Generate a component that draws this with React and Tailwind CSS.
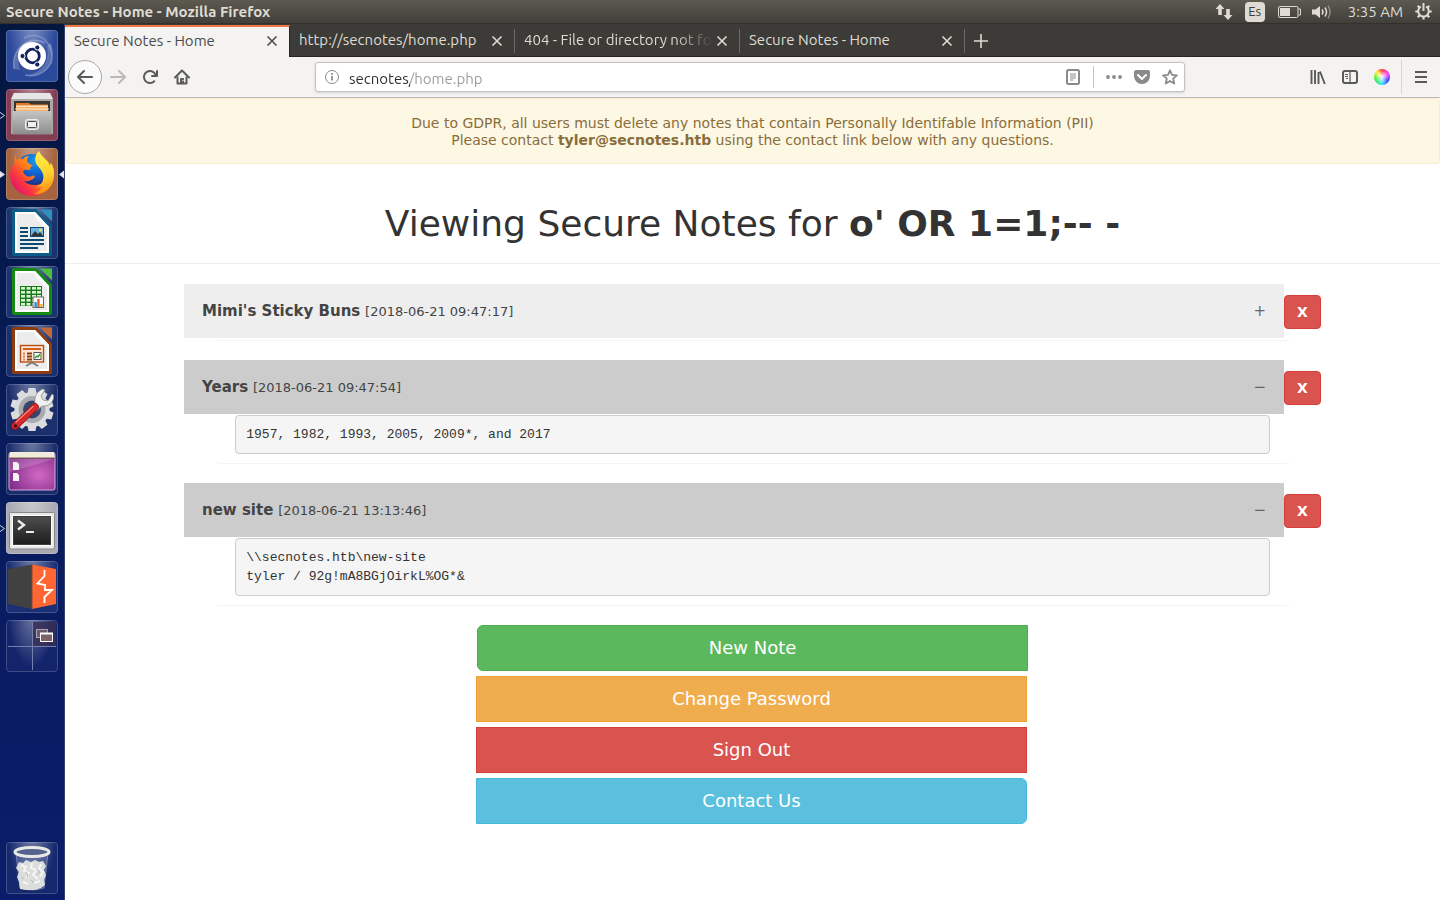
import React, { useState } from "react";

const UI_FONT = "font-['Ubuntu','Noto_Sans',sans-serif]";

/* ---------- system panel ---------- */

function TopPanel() {
  return (
    <header className="flex h-6 items-center justify-between border-b border-[#32312c] bg-linear-to-b from-[#5d5a50] to-[#403f3a] pr-2 pl-1.5 text-[#dfdbd2]">
      <h1 className="text-[15px] leading-5 font-bold">Secure Notes - Home - Mozilla Firefox</h1>
      <div className="flex items-center">
        <button aria-label="Network" className="mr-3">
          <svg width="18" height="18" viewBox="0 0 18 18" fill="#dfdbd2" className="block">
            <path d="M5 1 .5 6H3.200v6h3.600V6h2.700z" />
            <path d="M13 17l4.500-5h-2.700V6h-3.600v6H8.500z" />
          </svg>
        </button>
        <button aria-label="Keyboard layout" className="mr-3 flex h-5 w-5 items-center justify-center rounded-sm bg-[#dfdbd2] text-[13px] text-[#3c3b37]">
          Es
        </button>
        <button aria-label="Battery" className="mr-2.5">
          <svg width="25" height="14" viewBox="0 0 25 14" className="block">
            <rect x="1.500" y="1.500" width="19.500" height="11" rx="1.500" fill="none" stroke="#dfdbd2" />
            <path d="M21.500 4h2v6h-2" fill="none" stroke="#dfdbd2" />
            <rect x="3" y="3" width="10" height="8" fill="#dfdbd2" />
          </svg>
        </button>
        <button aria-label="Volume" className="mr-4">
          <svg width="20" height="16" viewBox="0 0 20 16" fill="none" strokeWidth="1.500" className="block">
            <path d="M0 5.500h3.500L8 2v12l-4.500-3.500H0z" fill="#dfdbd2" />
            <path d="M10 5.500q1.800 2.500 0 5" stroke="#dfdbd2" />
            <path d="M13 3.500q3 4.500 0 9" stroke="#dfdbd2" />
            <path d="M16 1.500q4.200 6.500 0 13" stroke="#8d8b82" />
          </svg>
        </button>
        <time className="mr-3 text-[15px] leading-5">3:35 AM</time>
        <button aria-label="Session">
          <svg width="17" height="17" viewBox="0 0 17 17" fill="none" stroke="#dfdbd2" className="block">
            <path d="M5.800 3.600a5.300 5.300 0 1 0 5.400 0" strokeWidth="2" />
            <path d="M8.500 0v8" strokeWidth="2" />
            <path d="M.3 8.500h3M13.700 8.500h3M2.700 2.700l2 2M14.300 2.700l-2 2M2.700 14.300l2-2M14.300 14.300l-2-2M8.500 13.500v3" strokeWidth="2.200" />
          </svg>
        </button>
      </div>
    </header>
  );
}

/* ---------- launcher icons (52 x 52) ---------- */

function UbuntuIcon() {
  return (
    <>
      <path d="M8 39C5 18 24 4 39 13M44 14c8 22-9 35-25 31M18 8c20-9 32 11 27 26" fill="none" stroke="#a9b9e6" strokeOpacity=".45" strokeWidth="1.500" />
      <path d="M8 39C5 18 24 4 39 13 24 6 8 20 14 40z" fill="#fff" fillOpacity=".2" />
      <path d="M44 14c8 22-9 35-25 31 14 0 26-12 22-29z" fill="#fff" fillOpacity=".2" />
      <circle cx="26" cy="27" r="14" fill="#000" fillOpacity=".2" />
      <circle cx="26" cy="26" r="14" fill="#fff" />
      <circle cx="26.500" cy="26" r="6.800" fill="none" stroke="#10235e" strokeWidth="2.800" />
      <g fill="#10235e" stroke="#fff" strokeWidth="1">
        <circle cx="16.500" cy="26" r="2.600" />
        <circle cx="31.300" cy="17.500" r="2.600" />
        <circle cx="31.300" cy="34.500" r="2.600" />
      </g>
    </>
  );
}

function FilesIcon() {
  return (
    <>
      <path d="M8 4h36l3 7v34H5V11z" fill="#a9a9a9" />
      <path d="M8 4h36l3 6H5z" fill="#e6e6e6" />
      <rect x="8" y="12" width="36" height="12" fill="#3b3531" />
      <path d="M10 14h13l2 1.500h17V24H10z" fill="#e07a2e" />
      <path d="M10 17h32v5H10z" fill="#f6b26b" />
      <path d="M10 16.500h32v1.200H10zM9 19.500h34v1H9z" fill="#fff1d8" />
      <path d="M6.500 22h39v23.500h-39z" fill="url(#metal)" />
      <rect x="19.500" y="30.500" width="13" height="10" rx="2" fill="#c9c9c9" stroke="#efefef" />
      <rect x="21.500" y="32.500" width="9" height="6" rx="1" fill="#f1f1f1" stroke="#4a4a4a" />
    </>
  );
}

function FirefoxIcon() {
  return (
    <>
      <circle cx="26" cy="23" r="17" fill="url(#globe)" />
      <path d="M10 7c-2 3-2 5-1 8-3 3-5 7-5 13 1 12 11 20 22 20 12 0 22-9 22-21 0-5-1-9-3-12 1 9-2 16-8 20-6 3-15 3-19-2 4 1 8-1 10-3 2-2 0-3-2-2-4 2-8-1-9-5 2-2 5-1 7-1 0-3 2-4 3-5-3 0-5-2-6-4 0-2 1-4 2-5-3 0-5 1-6 3-3-1-5 0-6 1-1-1-1-3-1-5z" fill="url(#fxFire)" />
      <path d="M33 3c-4 4-5 9-2 14 3 4 8 8 6 15-1 4-4 6-7 7 3 0 5 0 7-1-2 4-6 7-10 8 12 1 21-8 21-19 0-6-1-9-3-12-1 1-1 2-1 3-1-6-8-8-11-15z" fill="url(#fxYellow)" />
    </>
  );
}

function DocumentIcon({ dark, light, children }) {
  return (
    <>
      <path d="M8 2h22l16 17v28a2 2 0 0 1-2 2H8a2 2 0 0 1-2-2V4a2 2 0 0 1 2-2z" fill={dark} />
      <path d="M34 2.500h12v12z" fill={light} />
      <path d="M9 5h20l14 15v26H9z" fill="#fff" />
      <path d="M11 7h17l13 14v23H11z" fill="#ececec" />
      <path d="M29 5v5l9 10h5z" fill="#fbfbfb" />
      {children}
    </>
  );
}

function WriterIcon() {
  return (
    <DocumentIcon dark="#0d5c88" light="#2f8fbe">
      <path d="M14 21h8M14 25h8M14 29h8M14 33h24M14 37h24M14 41h18" stroke="#0d4a72" strokeWidth="2" />
      <rect x="24.500" y="20.500" width="13" height="9" fill="#6db5e0" stroke="#0d4a72" />
      <path d="M25 29l4-5 3 3 2-2 3 4z" fill="#333" />
      <circle cx="34.500" cy="23" r="1.500" fill="#f5d94e" />
    </DocumentIcon>
  );
}

function CalcIcon() {
  return (
    <DocumentIcon dark="#148a12" light="#4cbf40">
      <rect x="14" y="20" width="22" height="20" fill="#127a12" />
      <g fill="#d9f2d2">
        {[21, 25, 29, 33, 37].map((y) =>
          [15, 20.5, 26, 31].map((x) => <rect key={`${x}-${y}`} x={x} y={y} width="4" height="2.600" />)
        )}
      </g>
      <rect x="27" y="31" width="10.500" height="10.500" fill="#fff" stroke="#666" />
      <path d="M28.500 36h2.300v5h-2.300z" fill="#1f8dd6" />
      <path d="M31.300 33h2.300v8h-2.300z" fill="#e0562a" />
      <path d="M34.200 38h2.300v3h-2.300z" fill="#f1b81c" />
    </DocumentIcon>
  );
}

function ImpressIcon() {
  return (
    <DocumentIcon dark="#8d3c10" light="#c06a3c">
      <rect x="14.500" y="20.500" width="23" height="16.500" fill="#fde6d8" stroke="#b84d12" strokeWidth="1.400" />
      <path d="M17 24h18" stroke="#d2601c" strokeWidth="2" />
      <path d="M17 28.500h2M17 31.500h2M17 34.500h2" stroke="#e08552" strokeWidth="2" />
      <path d="M21 28.500h5M21 31.500h5M21 34.500h5" stroke="#8d3c10" strokeWidth="2" />
      <rect x="28" y="27.500" width="7" height="7" fill="#fff" stroke="#555" />
      <path d="M29 33l2-2 1 1 2-3" stroke="#24a024" strokeWidth="1.400" fill="none" />
      <path d="M20 41l6-3.500 6 3.500" stroke="#777" strokeWidth="1.600" fill="none" />
    </DocumentIcon>
  );
}

function SettingsIcon() {
  return (
    <>
      <g fill="#dcdcdc">
        {[0, 36, 72, 108, 144].map((a) => (
          <path key={a} d="M22.500 4h7l1 6v31l-1 6h-7l-1-6V10z" transform={`rotate(${a} 26 25.500)`} />
        ))}
        <circle cx="26" cy="25.500" r="17.500" />
      </g>
      <circle cx="26" cy="25.500" r="13.500" fill="#a9abb3" />
      <circle cx="26" cy="25.500" r="9" fill="#39456c" />
      <path d="M29 19c-1-6 2-12 8-14l2 1-4 6 2 4 5 1 4-7 1.500 1c1 6-4 11-9 11-2 0-3 0-4 1l-4 4-5-5z" fill="#f1f1f1" stroke="#8b8b8b" strokeWidth=".8" />
      <path d="M9 42 29 23" stroke="#8f1212" strokeWidth="7.500" strokeLinecap="round" />
      <path d="M9 42 29 23" stroke="#d72a2a" strokeWidth="6" strokeLinecap="round" />
      <path d="M10 38 27 22.500" stroke="#f48a80" strokeWidth="1.300" strokeLinecap="round" />
      <circle cx="9.500" cy="42" r="1.800" fill="#4d0808" />
    </>
  );
}

function DesktopIcon() {
  return (
    <>
      <rect x="3" y="9.500" width="46" height="37.500" rx="2" fill="url(#purple)" stroke="#d9a9dc" />
      <path d="M4 9h44l1 6H3z" fill="#efecdc" />
      <path d="M3 15h46" stroke="#66603e" />
      <path d="M4 16h44L4 29z" fill="#fff" fillOpacity=".16" />
      <path d="M7 19h4l2 2v6H7zM7 30h4l2 2v6H7z" fill="#f5f1f5" />
    </>
  );
}

function TerminalIcon() {
  return (
    <>
      <rect x="3.500" y="10.500" width="45" height="36.500" rx="1" fill="#e8e8e8" stroke="#888" />
      <rect x="6.500" y="13.500" width="39" height="30" fill="#3a3a3a" stroke="#fff" />
      <rect x="8" y="15" width="36" height="27" fill="url(#screen)" />
      <path d="M12 18.500l6 4.500-6 4.500" fill="none" stroke="#eee" strokeWidth="2.300" />
      <path d="M20 30h8" stroke="#eee" strokeWidth="2" />
    </>
  );
}

function BurpIcon() {
  return (
    <>
      <path d="M2 8 26 3.500V48L2 43z" fill="#414141" />
      <path d="M50 8 26 3.500V48l24-5z" fill="#ff6633" />
      <path d="M26 3.500V48" stroke="#8a4a33" />
      <path d="M38.500 9v6l-7 7.500 7.500 1.500v5h7l-7.500 7v6" fill="none" stroke="#fff" strokeWidth="1.800" />
    </>
  );
}

function WorkspaceIcon() {
  return (
    <>
      <rect x="26" y="2" width="24" height="24" fill="#3a2d52" fillOpacity=".8" />
      <path d="M26.500 2v48M2 26.500h48" stroke="#7480ad" />
      <rect x="30.500" y="9.500" width="11" height="8" fill="#6b5a6c" stroke="#aaa3b4" />
      <rect x="34.500" y="13.500" width="12" height="8" fill="#7b6168" stroke="#fff" />
      <path d="M34 13.500h13" stroke="#fff" strokeWidth="2" />
    </>
  );
}

function TrashIcon() {
  return (
    <>
      <path d="M10 11h32l-4 35q-12 4-24 0z" fill="#8d9cc8" fillOpacity=".3" stroke="#b4c0dd" strokeOpacity=".5" />
      <path d="M13 40l-2-5 2-5-3-4 3-6 4 1 3-3 5 2 4-2 4 2 4-1 3 5-2 4 2 5-2 5 1 5-4 3-6 2H20l-6-1z" fill="#dcdedc" />
      <path d="M15 23l5 2-2 4 5 2-3 5M26 21l-1 5 5 2-3 5 5 4M35 22l-2 5 4 3-3 5M17 40l5 2M28 41l6-2" fill="none" stroke="#f6f6f4" strokeWidth="2" />
      <path d="M19 30l3 2-1 3M31 27l3 3-3 3M25 38l3 3M15 35l3 2" fill="none" stroke="#b4b8ba" />
      <ellipse cx="26" cy="10" rx="17" ry="4.500" fill="#56648d" stroke="#e8e8e4" strokeWidth="3" />
    </>
  );
}

const APPS = [
  { name: "Search your computer", tile: "bg-[#2c4a9c]", Icon: UbuntuIcon },
  { name: "Files", tile: "bg-[#843e54]", Icon: FilesIcon, left: "open" },
  { name: "Firefox Web Browser", tile: "bg-[#a5633f]", Icon: FirefoxIcon, left: "solid", right: true },
  { name: "LibreOffice Writer", tile: "bg-[#1b336c]", Icon: WriterIcon },
  { name: "LibreOffice Calc", tile: "bg-[#1b336c]", Icon: CalcIcon },
  { name: "LibreOffice Impress", tile: "bg-[#1b2f6c]", Icon: ImpressIcon },
  { name: "System Settings", tile: "bg-[#1b2f6c]", Icon: SettingsIcon },
  { name: "Show Desktop", tile: "bg-[#1b2c6c]", Icon: DesktopIcon },
  { name: "Terminal", tile: "bg-[#a9abb2]", Icon: TerminalIcon, left: "open" },
  { name: "Burp Suite", tile: "bg-[#1b2f74]", Icon: BurpIcon },
  { name: "Workspace Switcher", tile: "bg-[#14246a]", Icon: WorkspaceIcon },
];

function LauncherButton({ app }) {
  const { name, tile, Icon, left, right } = app;
  return (
    <button
      aria-label={name}
      className={`relative h-[52px] w-[52px] rounded ${tile} bg-[radial-gradient(ellipse_at_50%_-10%,rgba(255,255,255,0.38),rgba(255,255,255,0)_65%)] shadow-[inset_0_0_0_1px_rgba(255,255,255,0.18)]`}
    >
      <svg width="52" height="52" viewBox="0 0 52 52" className="block">
        <Icon />
      </svg>
      {left && (
        <svg width="6" height="9" viewBox="0 0 6 9" className="absolute top-[22px] -left-1.5">
          <path d="M-1 .7 4.500 4.500-1 8.300z" fill={left === "solid" ? "#e6e6ea" : "none"} stroke="#d0d2dc" />
        </svg>
      )}
      {right && (
        <svg width="6" height="9" viewBox="0 0 6 9" className="absolute top-[22px] -right-1.5">
          <path d="M6 .5 1 4.500 6 8.500z" fill="#e6e6ea" />
        </svg>
      )}
    </button>
  );
}

function Launcher() {
  return (
    <nav aria-label="Launcher" className="flex w-[65px] shrink-0 flex-col items-center gap-[7px] border-r border-[#33406f] bg-linear-to-b from-[#05163f] via-[#081c5c] to-[#0b1c6a] pt-1.5 pb-1.5">
      <svg width="0" height="0" className="absolute" aria-hidden="true">
        <defs>
          <linearGradient id="metal" x1="0" y1="0" x2="0" y2="1">
            <stop offset="0" stopColor="#c4c4c4" />
            <stop offset="1" stopColor="#8c8c8c" />
          </linearGradient>
          <radialGradient id="globe" cx=".6" cy=".2" r=".8">
            <stop offset="0" stopColor="#1a9be8" />
            <stop offset=".5" stopColor="#1160cf" />
            <stop offset="1" stopColor="#20246e" />
          </radialGradient>
          <linearGradient id="fxYellow" x1=".3" y1="0" x2=".5" y2="1">
            <stop offset="0" stopColor="#fff04a" />
            <stop offset=".6" stopColor="#ffd02e" />
            <stop offset="1" stopColor="#ff8a16" />
          </linearGradient>
          <linearGradient id="fxFire" x1=".8" y1=".2" x2=".1" y2=".8">
            <stop offset="0" stopColor="#ffb02f" />
            <stop offset=".45" stopColor="#ff7a1a" />
            <stop offset=".75" stopColor="#fb3640" />
            <stop offset="1" stopColor="#e3186b" />
          </linearGradient>
          <radialGradient id="purple" cx=".65" cy=".6" r=".8">
            <stop offset="0" stopColor="#d169c4" />
            <stop offset="1" stopColor="#74227f" />
          </radialGradient>
          <linearGradient id="screen" x1="0" y1="0" x2="0" y2="1">
            <stop offset="0" stopColor="#4d4d4d" />
            <stop offset="1" stopColor="#1d1d1d" />
          </linearGradient>
        </defs>
      </svg>
      {APPS.map((app) => (
        <LauncherButton key={app.name} app={app} />
      ))}
      <div className="mt-auto flex">
        <LauncherButton app={{ name: "Trash", tile: "bg-[#17296e]", Icon: TrashIcon }} />
      </div>
    </nav>
  );
}

/* ---------- browser chrome ---------- */

const TABS = [
  { title: "Secure Notes - Home", active: true },
  { title: "http://secnotes/home.php" },
  { title: "404 - File or directory not found", fade: true },
  { title: "Secure Notes - Home" },
];

function TabStrip() {
  return (
    <div className="flex h-[33px] border-b border-[#262521] bg-[#3c3b37] pt-px text-[15px]">
      {TABS.map((tab, i) => (
        <div
          key={i}
          className={
            tab.active
              ? "-mb-px flex w-[225px] items-center border-t-2 border-r border-t-[#f07746] border-r-[#262521] bg-[#f4f3f2] pr-[11px] pb-0.5 pl-[9px] text-[#4c4c4c]"
              : "flex w-[225px] items-center bg-[linear-gradient(#6b6a64,#6b6a64)] bg-[length:1px_24px] bg-[position:right_4px] bg-no-repeat pr-3 pl-[9px] text-[#dfdbd2]"
          }
        >
          <button
            className={
              tab.fade
                ? "min-w-0 flex-1 overflow-hidden text-left whitespace-nowrap [mask-image:linear-gradient(to_right,black_80%,transparent)]"
                : "min-w-0 flex-1 overflow-hidden text-left whitespace-nowrap"
            }
          >
            {tab.title}
          </button>
          <button aria-label="Close tab" className="ml-1 shrink-0">
            <svg width="12" height="12" viewBox="0 0 12 12" fill="none" stroke="currentColor" strokeWidth="1.600" className="block">
              <path d="M1.500 1.500l9 9M10.500 1.500l-9 9" />
            </svg>
          </button>
        </div>
      ))}
      <button aria-label="New tab" className="ml-2 text-[#dfdbd2]">
        <svg width="16" height="16" viewBox="0 0 16 16" fill="none" stroke="currentColor" strokeWidth="1.600" className="block">
          <path d="M8 1v14M1 8h14" />
        </svg>
      </button>
    </div>
  );
}

function Glyph({ children, fill = "none" }) {
  return (
    <svg width="16" height="16" viewBox="0 0 16 16" fill={fill} className="block">
      {children}
    </svg>
  );
}

function ToolButton({ label, className = "", children }) {
  return (
    <button aria-label={label} className={`flex h-8 w-8 shrink-0 items-center justify-center ${className}`}>
      {children}
    </button>
  );
}

const BACK = "M15 7H3.414l4.293-4.293a1 1 0 0 0-1.414-1.414l-6 6a1 1 0 0 0 0 1.414l6 6a1 1 0 0 0 1.414-1.414L3.414 9H15a1 1 0 0 0 0-2z";

function Toolbar() {
  return (
    <div className="flex h-[41px] items-center border-b border-[#bdbbb9] bg-[#f4f3f2] pl-[3px] text-[#5a5a58]">
      <button aria-label="Back" className="flex h-[34px] w-[34px] shrink-0 items-center justify-center rounded-full border border-[#aaa8a6] bg-[#fbfbfb]">
        <Glyph fill="currentColor"><path d={BACK} /></Glyph>
      </button>
      <ToolButton label="Forward" className="text-[#bbb9b7]">
        <Glyph fill="currentColor"><path d={BACK} transform="matrix(-1 0 0 1 16 0)" /></Glyph>
      </ToolButton>
      <ToolButton label="Reload">
        <Glyph fill="currentColor">
          <path d="M15 1a1 1 0 0 0-1 1v2.418A6.995 6.995 0 1 0 8 15a6.954 6.954 0 0 0 4.950-2.050 1 1 0 0 0-1.414-1.414A5.019 5.019 0 1 1 12.549 6H10a1 1 0 0 0 0 2h5a1 1 0 0 0 1-1V2a1 1 0 0 0-1-1z" />
        </Glyph>
      </ToolButton>
      <ToolButton label="Home">
        <Glyph>
          <path d="M1 8.500 8 1.500l7 7" stroke="currentColor" strokeWidth="2" strokeLinecap="round" strokeLinejoin="round" />
          <path d="M3.500 7.500V14.500h9V7.500" stroke="currentColor" strokeWidth="2" strokeLinejoin="round" />
          <path d="M6.500 14V9.500h3V14" fill="currentColor" stroke="currentColor" />
          <circle cx="8.800" cy="11.500" r=".7" fill="#f4f3f2" />
        </Glyph>
      </ToolButton>
      <div className="min-w-0 grow-[118] basis-0" />
      <div className="flex h-[30px] min-w-0 grow-[868] basis-0 items-center rounded-[3px] border border-[#c4c2c0] bg-white pl-2 text-[#8a8a8a] shadow-sm">
        <button aria-label="Site information">
          <Glyph>
            <circle cx="8" cy="8" r="6.500" stroke="currentColor" />
            <path d="M8 7v4.500M8 4v1.800" stroke="currentColor" strokeWidth="1.800" />
          </Glyph>
        </button>
        <input
          aria-label="Address"
          defaultValue="secnotes/home.php"
          className="ml-[9px] h-6 min-w-0 flex-1 bg-[linear-gradient(to_right,#2e2e2e_61px,#9a9a9a_61px)] bg-clip-text pt-0.5 text-[15px] text-transparent outline-none"
        />
        <button aria-label="Reader view" className="mr-3">
          <Glyph>
            <rect x="2" y="1" width="12" height="14" rx="1.500" stroke="currentColor" strokeWidth="2" />
            <path d="M5 5h6M5 7h6M5 9h6M5 11h3.500" stroke="currentColor" />
          </Glyph>
        </button>
        <span className="mr-3 h-[22px] w-px bg-[#c8c6c4]" />
        <button aria-label="Page actions" className="mr-3">
          <Glyph fill="currentColor">
            <circle cx="2" cy="8" r="1.900" />
            <circle cx="8" cy="8" r="1.900" />
            <circle cx="14" cy="8" r="1.900" />
          </Glyph>
        </button>
        <button aria-label="Save to Pocket" className="mr-3">
          <Glyph fill="currentColor">
            <path d="M8 15a8 8 0 0 1-8-8V3a2 2 0 0 1 2-2h12a2 2 0 0 1 2 2v4a8 8 0 0 1-8 8zm3.985-10.032a.99.99 0 0 0-.725.319L7.978 8.570 4.755 5.336A.984.984 0 0 0 4 4.968a1 1 0 0 0-.714 1.700l-.016.011 3.293 3.306.707.707a1 1 0 0 0 1.414 0l.707-.707L12.700 6.679a1 1 0 0 0-.715-1.711z" />
          </Glyph>
        </button>
        <button aria-label="Bookmark this page" className="mr-1.5">
          <Glyph>
            <path d="M8 1.300l2 4.500 4.900.5-3.700 3.300 1.100 4.900L8 12l-4.300 2.500 1.100-4.900L1.100 6.300 6 5.800z" stroke="currentColor" strokeWidth="1.800" strokeLinejoin="round" />
          </Glyph>
        </button>
      </div>
      <div className="min-w-0 grow-[118] basis-0" />
      <ToolButton label="Library">
        <Glyph>
          <path d="M1.500 1v14M5 1v14M8.500 3v12M10 2.500 14.800 15" stroke="currentColor" strokeWidth="1.900" />
        </Glyph>
      </ToolButton>
      <ToolButton label="Sidebars">
        <Glyph>
          <rect x="1" y="2" width="14" height="12" rx="2" stroke="currentColor" strokeWidth="2" />
          <path d="M8 2v12" stroke="currentColor" strokeWidth="1.200" />
          <path d="M3 5.500h3M3 7.500h3M4 9.500h2" stroke="currentColor" />
        </Glyph>
      </ToolButton>
      <ToolButton label="Colour picker">
        <span className="h-4 w-4 rounded-full bg-[radial-gradient(circle,rgba(255,255,255,0.95),rgba(255,255,255,0)_65%),conic-gradient(#f33,#f3f_60deg,#33f_120deg,#3df_180deg,#3e3_250deg,#fe3_315deg,#f33)]" />
      </ToolButton>
      <span className="ml-[3px] h-[34px] w-px bg-[#d8d6d4]" />
      <ToolButton label="Open menu" className="mr-[3px] ml-[3px]">
        <Glyph>
          <path d="M2 3h12M2 8h12M2 13h12" stroke="currentColor" strokeWidth="2" />
        </Glyph>
      </ToolButton>
    </div>
  );
}

/* ---------- page ---------- */

const NOTES = [
  { title: "Mimi's Sticky Buns", date: "[2018-06-21 09:47:17]", body: "", open: false },
  { title: "Years", date: "[2018-06-21 09:47:54]", body: "1957, 1982, 1993, 2005, 2009*, and 2017", open: true },
  { title: "new site", date: "[2018-06-21 13:13:46]", body: "\\\\secnotes.htb\\new-site\ntyler / 92g!mA8BGjOirkL%OG*&", open: true },
];

function Note({ note }) {
  const [open, setOpen] = useState(note.open);
  return (
    <section className="mb-5">
      <div className="flex items-center justify-center">
        <button
          aria-expanded={open}
          onClick={() => setOpen(!open)}
          className={`flex h-[54px] w-4/5 items-center justify-between px-[18px] text-left text-[#444] ${open ? "bg-[#ccc]" : "bg-[#eee]"}`}
        >
          <span className="text-[15px]">
            <b>{note.title}</b> <span className="text-[13px]">{note.date}</span>
          </span>
          <span className="text-[15px] text-[#666]">{open ? "\u2212" : "+"}</span>
        </button>
        <button className="mt-0.5 h-[34px] w-[37px] rounded border border-[#d43f3a] bg-[#d9534f] text-sm font-bold text-white">
          X
        </button>
      </div>
      <div className="mx-auto w-[78%] rounded bg-white px-[19px] pt-px shadow-[0_1px_1px_rgba(0,0,0,0.05)]">
        {open && note.body ? (
          <div className="pb-[9px]">
            <pre className="rounded border border-[#ccc] bg-[#f5f5f5] px-2.5 py-[9px] font-['Liberation_Mono',monospace] text-[13px] leading-[19px] text-[#333]">
              {note.body}
            </pre>
          </div>
        ) : (
          <div className="h-px" />
        )}
      </div>
    </section>
  );
}

const ACTIONS = [
  { label: "New Note", style: "rounded-l-md border-[#4cae4c] bg-[#5cb85c]" },
  { label: "Change Password", style: "mr-px -ml-px border-[#eea236] bg-[#f0ad4e]" },
  { label: "Sign Out", style: "mr-px -ml-px border-[#d43f3a] bg-[#d9534f]" },
  { label: "Contact Us", style: "mr-px -ml-px rounded-r-md border-[#46b8da] bg-[#5bc0de]" },
];

function Page() {
  return (
    <main className="flex-1 bg-white font-['DejaVu_Sans',sans-serif] text-[#333]">
      <div role="alert" className="rounded border border-[#faebcc] bg-[#fcf8e3] pt-4 pb-3.5 text-center text-sm leading-[17px] text-[#8a6d3b]">
        <p>Due to GDPR, all users must delete any notes that contain Personally Identifable Information (PII)</p>
        <p>
          Please contact <b>tyler@secnotes.htb</b> using the contact link below with any questions.
        </p>
      </div>
      <div className="mb-5 border-b border-[#eee] pt-10 pb-5 text-center">
        <h2 className="text-4xl leading-[39px]">
          Viewing Secure Notes for <b>o' OR 1=1;-- -</b>
        </h2>
      </div>
      {NOTES.map((note) => (
        <Note key={note.title} note={note} />
      ))}
      <div className="mx-auto flex w-[calc(40%+1px)] flex-col gap-[5px]">
        {ACTIONS.map((a) => (
          <a key={a.label} href="#" className={`flex h-[46px] items-center justify-center border text-lg text-white ${a.style}`}>
            {a.label}
          </a>
        ))}
      </div>
    </main>
  );
}

export default function App() {
  return (
    <div className={`flex min-h-screen flex-col ${UI_FONT}`}>
      <TopPanel />
      <div className="flex flex-1">
        <Launcher />
        <div className="flex min-w-0 flex-1 flex-col">
          <TabStrip />
          <Toolbar />
          <Page />
        </div>
      </div>
    </div>
  );
}
